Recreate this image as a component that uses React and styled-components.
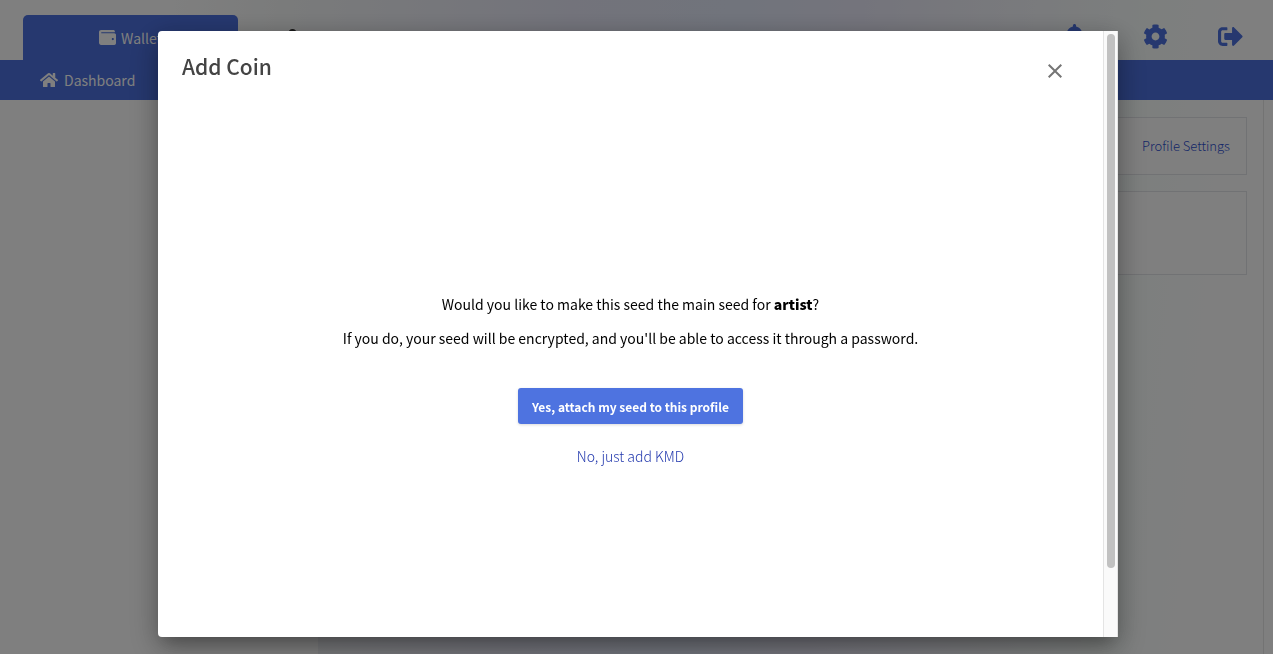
import React, { Component } from 'react'
import styled, { createGlobalStyle } from 'styled-components'
import { FaWallet, FaHome, FaCog, FaSignOutAlt, FaUser, FaBell } from 'react-icons/fa'
import { MdClose } from 'react-icons/md'

const GlobalStyle = createGlobalStyle`
    * {
        box-sizing: border-box;
    }
    body {
        margin: 0;
        overflow: hidden;
        font-family: "Noto Sans CJK SC", "Open Sans", sans-serif;
        color: #000;
    }
`

const Page = styled.div`
    min-height: 100vh;
    display: flex;
    flex-direction: column;
    background: linear-gradient(95deg, #fff 12%, #f4f6f6 22%, #e6e7f6 43%, #e2e8f8 55%, #e9e9f8 65%, #f4f6fa 78%, #fafffd 87%, #fff 94%);
`

const Header = styled.header`
    display: flex;
    align-items: flex-end;
    height: 60px;
    padding: 0 30px 0 23px;
`

const Tab = styled.button`
    display: flex;
    align-items: center;
    justify-content: ${props => (props.$active ? 'center' : 'flex-start')};
    gap: 5px;
    width: 215px;
    height: 45px;
    padding: 0 46px;
    border: none;
    border-radius: 5px 5px 0 0;
    background: ${props => (props.$active ? '#4c70de' : 'transparent')};
    color: ${props => (props.$active ? '#fff' : '#333')};
    font-family: inherit;
    font-size: 14px;
    line-height: 20px;
`

const Actions = styled.div`
    display: flex;
    gap: 50px;
    margin-left: auto;
`

const IconButton = styled.button`
    display: flex;
    align-items: center;
    height: 48px;
    padding: 0;
    border: none;
    background: transparent;
    color: #4c70de;
    font-size: 25px;

    &:first-child {
        margin-right: 6px;
    }
`

const SubNav = styled.nav`
    display: flex;
    align-items: center;
    height: 40px;
    padding: 0 40px;
    background: #4c70de;
`

const NavLink = styled.a`
    display: flex;
    align-items: center;
    gap: 6px;
    color: #fff;
    font-size: 14px;
    line-height: 20px;
    text-decoration: none;
`

const Content = styled.div`
    flex: 1;
    display: flex;
`

const Sidebar = styled.aside`
    width: 318px;
    background: #fff;
`

const Main = styled.main`
    flex: 1;
    display: flex;
    flex-direction: column;
    gap: 16px;
    margin-right: 9px;
    padding: 17px 16px 0;
    border-right: 1px solid #e6e6e6;
`

const Card = styled.section`
    display: flex;
    align-items: center;
    justify-content: flex-end;
    min-height: ${props => (props.$tall ? '84px' : '58px')};
    padding: 0 16px;
    border: 1px solid #e3e4e8;
    background: #fff;
`

const CardLink = styled.a`
    color: #2c4ed0;
    font-size: 13px;
    font-weight: 300;
    line-height: 20px;
    text-decoration: none;
`

const Backdrop = styled.div`
    position: fixed;
    inset: 0;
    display: flex;
    justify-content: center;
    padding: 31px 155px 17px 158px;
    background: rgba(0, 0, 0, 0.5);
`

const Dialog = styled.div`
    flex: 1;
    display: flex;
    max-width: 960px;
    overflow: hidden;
    border-radius: 4px 0 0 4px;
    background: #fff;
    box-shadow: 0 11px 15px -7px rgba(0, 0, 0, 0.2), 0 12px 32px 2px rgba(0, 0, 0, 0.2), 0 5px 24px 2px rgba(0, 0, 0, 0.14);
`

const DialogPane = styled.div`
    flex: 1;
    display: flex;
    flex-direction: column;
`

const DialogHeader = styled.div`
    display: flex;
    justify-content: space-between;
    align-items: flex-start;
    padding: 20px 28px 0 24px;
`

const Title = styled.h2`
    margin: 0;
    color: #444;
    font-size: 21px;
    font-weight: 500;
    line-height: 30px;
`

const CloseButton = styled.button`
    display: flex;
    padding: 8px;
    border: none;
    background: transparent;
    color: #757575;
    font-size: 24px;
`

const DialogBody = styled.div`
    flex: 1;
    display: flex;
    flex-direction: column;
    align-items: center;
    justify-content: center;
    padding-top: 32px;
`

const Question = styled.p`
    margin: 0 0 10px;
    font-size: 14px;
    line-height: 24px;
    text-align: center;

    b {
        font-weight: 900;
    }
`

const PrimaryButton = styled.button`
    height: 36px;
    margin: 28px 0 20px;
    padding: 0 14px;
    border: none;
    border-radius: 3px;
    background: #4e73e0;
    box-shadow: 0 1px 3px rgba(0, 0, 0, 0.15);
    color: #fff;
    font-family: inherit;
    font-size: 12px;
    font-weight: 700;
`

const TextLink = styled.a`
    color: #2137ad;
    font-size: 14px;
    font-weight: 300;
    line-height: 24px;
    text-decoration: none;
`

const ScrollTrack = styled.div`
    width: 15px;
    padding: 3px 2px 3px 3px;
    border: solid #e4e4e4;
    border-width: 0 1px;
    background: #fafafa;
`

const ScrollThumb = styled.div`
    height: 89%;
    border-radius: 4px;
    background: #c1c1c1;
`

class App extends Component {
    constructor(props) {
        super(props)

        this.state = {
            open: true,
        }
    }

    handleClose = () => {
        this.setState({ open: false })
    }

    renderDialog = () => {
        return (
            <Backdrop>
                <Dialog role="dialog" aria-modal="true" aria-labelledby="dialog-title">
                    <DialogPane>
                        <DialogHeader>
                            <Title id="dialog-title">Add Coin</Title>
                            <CloseButton aria-label="Close" onClick={this.handleClose}><MdClose /></CloseButton>
                        </DialogHeader>
                        <DialogBody>
                            <Question>Would you like to make this seed the main seed for <b>artist</b>?</Question>
                            <Question>If you do, your seed will be encrypted, and you'll be able to access it through a password.</Question>
                            <PrimaryButton onClick={this.handleClose}>Yes, attach my seed to this profile</PrimaryButton>
                            <TextLink href="#add">No, just add KMD</TextLink>
                        </DialogBody>
                    </DialogPane>
                    <ScrollTrack aria-hidden="true">
                        <ScrollThumb />
                    </ScrollTrack>
                </Dialog>
            </Backdrop>
        )
    }

    render() {
        const { open } = this.state
        return (
            <Page>
                <GlobalStyle />
                <Header>
                    <Tab $active><FaWallet size={17} />Wallet</Tab>
                    <Tab aria-label="Identity"><FaUser size={17} /></Tab>
                    <Actions>
                        <IconButton aria-label="Notifications"><FaBell /></IconButton>
                        <IconButton aria-label="Settings"><FaCog /></IconButton>
                        <IconButton aria-label="Log out"><FaSignOutAlt /></IconButton>
                    </Actions>
                </Header>
                <SubNav>
                    <NavLink href="#dashboard"><FaHome size={18} />Dashboard</NavLink>
                </SubNav>
                <Content>
                    <Sidebar />
                    <Main>
                        <Card>
                            <CardLink href="#profile">Profile Settings</CardLink>
                        </Card>
                        <Card $tall />
                    </Main>
                </Content>
                {open && this.renderDialog()}
            </Page>
        )
    }
}

export default App
